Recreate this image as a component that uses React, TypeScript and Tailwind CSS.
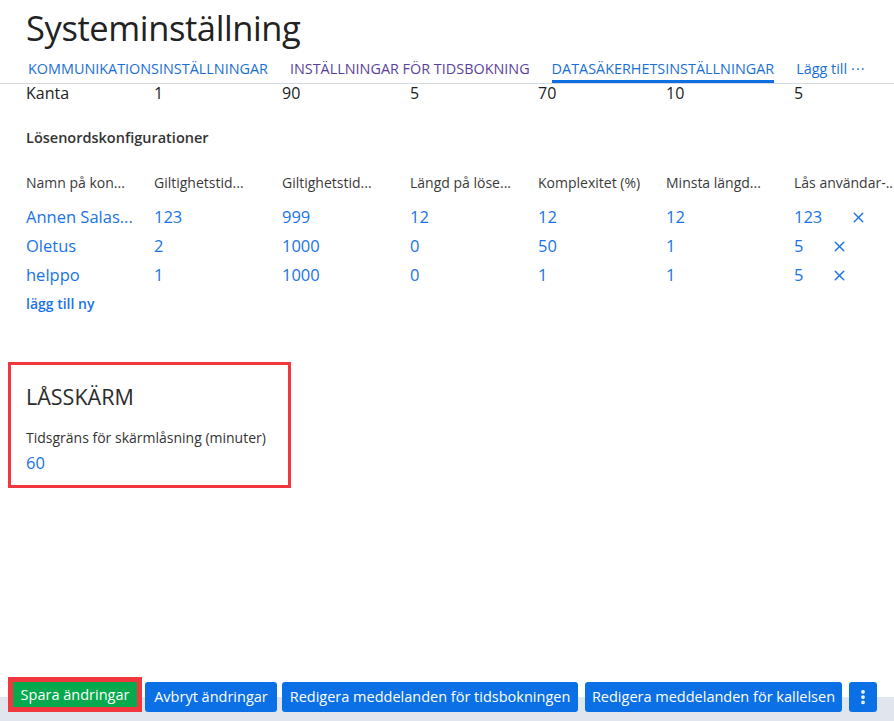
import { X, EllipsisVertical } from "lucide-react";

const tabs = [
  { label: "KOMMUNIKATIONSINSTÄLLNINGAR", color: "text-[#1a6fd6]", active: false },
  { label: "INSTÄLLNINGAR FÖR TIDSBOKNING", color: "text-[#5b3f9c]", active: false },
  { label: "DATASÄKERHETSINSTÄLLNINGAR", color: "text-[#1a6fd6]", active: true },
];

const kanta = ["Kanta", "1", "90", "5", "70", "10", "5"];

const headers = [
  "Namn på kon...",
  "Giltighetstid...",
  "Giltighetstid...",
  "Längd på löse...",
  "Komplexitet (%)",
  "Minsta längd...",
  "Lås användar-...",
];

const configs = [
  ["Annen Salas...", "123", "999", "12", "12", "12", "123"],
  ["Oletus", "2", "1000", "0", "50", "1", "5"],
  ["helppo", "1", "1000", "0", "1", "1", "5"],
];

const App = () => {
  return (
    <div className="h-screen flex flex-col bg-white font-['Open_Sans',sans-serif] text-[#2b2b2b]">
      <div className="px-[26px] pt-[4px]">
        <h1 className="text-[34.5px] leading-[48px] tracking-[-0.4px] text-[#222]">Systeminställning</h1>
      </div>
      <div className="flex items-end gap-[22px] px-[28px] mt-[1px] border-b border-[#d5dae1] h-[31px] shrink-0">
        {tabs.map((t) => (
          <div
            key={t.label}
            className={`text-[14.4px] leading-[20px] pb-[1px] border-b-[3px] whitespace-nowrap ${t.color} ${
              t.active ? "border-[#0f6fe0]" : "border-transparent"
            }`}
          >
            {t.label}
          </div>
        ))}
        <div className="text-[14.4px] leading-[20px] pb-[1px] border-b-[3px] border-transparent text-[#1a6fd6] flex items-center gap-[4px] whitespace-nowrap">
          Lägg till <span className="tracking-[1px]">···</span>
        </div>
      </div>

      <div className="flex-1">
        <div className="px-[26px]">
          <div className="flex h-[18px] items-center leading-[18px] text-[16px] text-[#222]">
            {kanta.map((v, i) => (
              <div key={i} className="w-[128px] shrink-0">
                {v}
              </div>
            ))}
          </div>

          <div className="mt-[26px] text-[14.5px] leading-[20px] font-semibold text-[#333]">Lösenordskonfigurationer</div>

          <div className="mt-[25px] flex text-[14px] text-[#3a3a3a] leading-[20px]">
            {headers.map((h, i) => (
              <div key={i} className="w-[128px] shrink-0 whitespace-nowrap">
                {h}
              </div>
            ))}
          </div>

          <div className="mt-[10px] flex flex-col">
            {configs.map((row, r) => (
              <div key={r} className="flex h-[29px] items-center text-[16.5px] text-[#1a73e8]">
                {row.map((v, i) => (
                  <div key={i} className={i < 6 ? "w-[128px] shrink-0 whitespace-nowrap" : "flex items-center"}>
                    {v}
                    {i === 6 && <X size={17} strokeWidth={2} className="ml-[28px] text-[#1a73e8]" />}
                  </div>
                ))}
              </div>
            ))}
          </div>

          <div className="mt-[4px] text-[14px] leading-[20px] font-semibold text-[#1a73e8]">lägg till ny</div>
        </div>

        <div className="mt-[48px] ml-[8px] w-[283px] h-[126px] border-[3px] border-[#f2383f] px-[15px] pt-[18px]">
          <div className="text-[21.5px] leading-[28px] text-[#2b2b2b]">LÅSSKÄRM</div>
          <div className="mt-[17px] text-[14px] leading-[20px] text-[#333]">Tidsgräns för skärmlåsning (minuter)</div>
          <div className="mt-[3px] text-[16.5px] leading-[24px] text-[#1a73e8]">60</div>
        </div>
      </div>

      <div className="h-[44px] shrink-0 flex items-start pl-[8px] bg-[linear-gradient(to_bottom,#ffffff_20px,#e1e6ee_20px)]">
        <div className="h-[35px] w-[134px] border-[5px] border-[#f2383f] bg-[#06a94d] flex items-center justify-center">
          <span className="text-white text-[14.5px] whitespace-nowrap">Spara ändringar</span>
        </div>
        <button className="mt-[5px] ml-[3px] h-[30px] w-[132px] rounded-[3px] bg-[#0b70e6] text-white text-[14.5px] whitespace-nowrap">
          Avbryt ändringar
        </button>
        <button className="mt-[5px] ml-[5px] h-[30px] w-[296px] rounded-[3px] bg-[#0b70e6] text-white text-[14.5px] whitespace-nowrap">
          Redigera meddelanden för tidsbokningen
        </button>
        <button className="mt-[5px] ml-[7px] h-[30px] w-[257px] rounded-[3px] bg-[#0b70e6] text-white text-[14.5px] whitespace-nowrap">
          Redigera meddelanden för kallelsen
        </button>
        <button className="mt-[5px] ml-[7px] h-[30px] w-[28px] rounded-[3px] bg-[#0b70e6] text-white flex items-center justify-center">
          <EllipsisVertical size={18} strokeWidth={3} />
        </button>
      </div>
    </div>
  );
};

export default App;
